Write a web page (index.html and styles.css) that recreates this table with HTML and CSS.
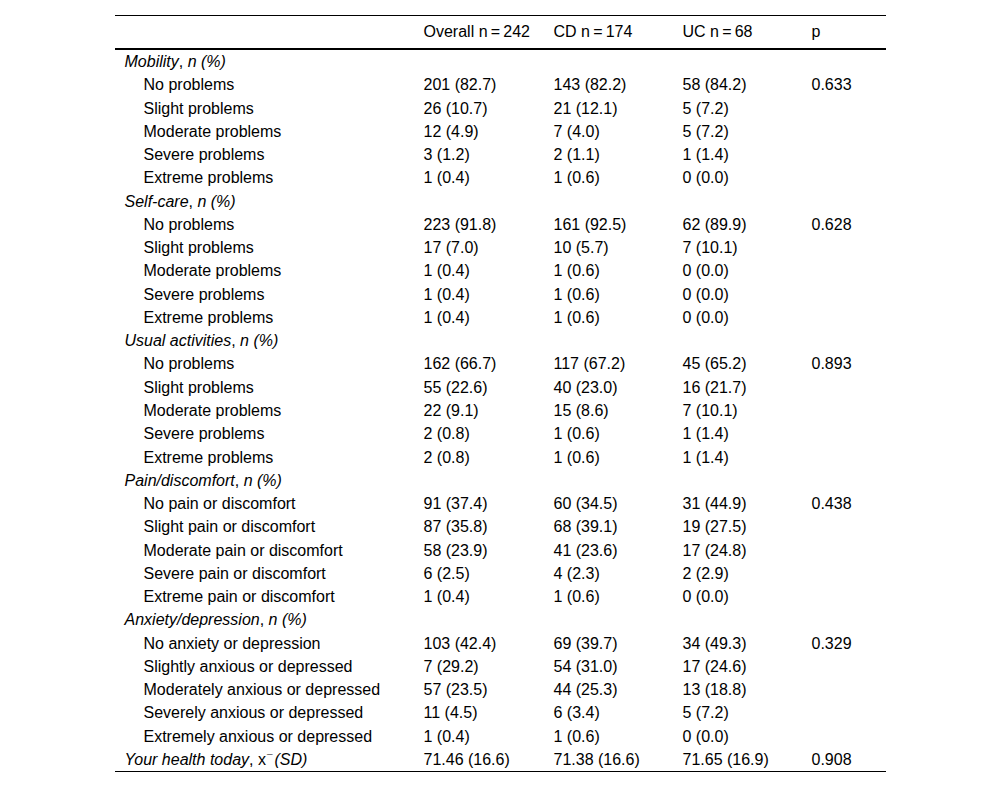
FILE: index.html
```html
<!DOCTYPE html>
<html lang="en">
<head>
<meta charset="utf-8">
<title>EQ-5D table</title>
<link rel="stylesheet" href="styles.css">
</head>
<body>
<table class="data">
  <colgroup>
    <col class="c-label">
    <col class="c-overall">
    <col class="c-cd">
    <col class="c-uc">
    <col class="c-p">
  </colgroup>
  <thead>
    <tr><th></th><th>Overall n&thinsp;=&thinsp;242</th><th>CD n&thinsp;=&thinsp;174</th><th>UC n&thinsp;=&thinsp;68</th><th>p</th></tr>
  </thead>
  <tbody>
    <tr class="grp"><td><i>Mobility</i>, <i>n (%)</i></td><td></td><td></td><td></td><td></td></tr>
    <tr><td class="sub">No problems</td><td>201 (82.7)</td><td>143 (82.2)</td><td>58 (84.2)</td><td>0.633</td></tr>
    <tr><td class="sub">Slight problems</td><td>26 (10.7)</td><td>21 (12.1)</td><td>5 (7.2)</td><td></td></tr>
    <tr><td class="sub">Moderate problems</td><td>12 (4.9)</td><td>7 (4.0)</td><td>5 (7.2)</td><td></td></tr>
    <tr><td class="sub">Severe problems</td><td>3 (1.2)</td><td>2 (1.1)</td><td>1 (1.4)</td><td></td></tr>
    <tr><td class="sub">Extreme problems</td><td>1 (0.4)</td><td>1 (0.6)</td><td>0 (0.0)</td><td></td></tr>
    <tr class="grp"><td><i>Self-care</i>, <i>n (%)</i></td><td></td><td></td><td></td><td></td></tr>
    <tr><td class="sub">No problems</td><td>223 (91.8)</td><td>161 (92.5)</td><td>62 (89.9)</td><td>0.628</td></tr>
    <tr><td class="sub">Slight problems</td><td>17 (7.0)</td><td>10 (5.7)</td><td>7 (10.1)</td><td></td></tr>
    <tr><td class="sub">Moderate problems</td><td>1 (0.4)</td><td>1 (0.6)</td><td>0 (0.0)</td><td></td></tr>
    <tr><td class="sub">Severe problems</td><td>1 (0.4)</td><td>1 (0.6)</td><td>0 (0.0)</td><td></td></tr>
    <tr><td class="sub">Extreme problems</td><td>1 (0.4)</td><td>1 (0.6)</td><td>0 (0.0)</td><td></td></tr>
    <tr class="grp"><td><i>Usual activities</i>, <i>n (%)</i></td><td></td><td></td><td></td><td></td></tr>
    <tr><td class="sub">No problems</td><td>162 (66.7)</td><td>117 (67.2)</td><td>45 (65.2)</td><td>0.893</td></tr>
    <tr><td class="sub">Slight problems</td><td>55 (22.6)</td><td>40 (23.0)</td><td>16 (21.7)</td><td></td></tr>
    <tr><td class="sub">Moderate problems</td><td>22 (9.1)</td><td>15 (8.6)</td><td>7 (10.1)</td><td></td></tr>
    <tr><td class="sub">Severe problems</td><td>2 (0.8)</td><td>1 (0.6)</td><td>1 (1.4)</td><td></td></tr>
    <tr><td class="sub">Extreme problems</td><td>2 (0.8)</td><td>1 (0.6)</td><td>1 (1.4)</td><td></td></tr>
    <tr class="grp"><td><i>Pain/discomfort</i>, <i>n (%)</i></td><td></td><td></td><td></td><td></td></tr>
    <tr><td class="sub">No pain or discomfort</td><td>91 (37.4)</td><td>60 (34.5)</td><td>31 (44.9)</td><td>0.438</td></tr>
    <tr><td class="sub">Slight pain or discomfort</td><td>87 (35.8)</td><td>68 (39.1)</td><td>19 (27.5)</td><td></td></tr>
    <tr><td class="sub">Moderate pain or discomfort</td><td>58 (23.9)</td><td>41 (23.6)</td><td>17 (24.8)</td><td></td></tr>
    <tr><td class="sub">Severe pain or discomfort</td><td>6 (2.5)</td><td>4 (2.3)</td><td>2 (2.9)</td><td></td></tr>
    <tr><td class="sub">Extreme pain or discomfort</td><td>1 (0.4)</td><td>1 (0.6)</td><td>0 (0.0)</td><td></td></tr>
    <tr class="grp"><td><i>Anxiety/depression</i>, <i>n (%)</i></td><td></td><td></td><td></td><td></td></tr>
    <tr><td class="sub">No anxiety or depression</td><td>103 (42.4)</td><td>69 (39.7)</td><td>34 (49.3)</td><td>0.329</td></tr>
    <tr><td class="sub">Slightly anxious or depressed</td><td>7 (29.2)</td><td>54 (31.0)</td><td>17 (24.6)</td><td></td></tr>
    <tr><td class="sub">Moderately anxious or depressed</td><td>57 (23.5)</td><td>44 (25.3)</td><td>13 (18.8)</td><td></td></tr>
    <tr><td class="sub">Severely anxious or depressed</td><td>11 (4.5)</td><td>6 (3.4)</td><td>5 (7.2)</td><td></td></tr>
    <tr><td class="sub">Extremely anxious or depressed</td><td>1 (0.4)</td><td>1 (0.6)</td><td>0 (0.0)</td><td></td></tr>
    <tr class="grp last"><td><i>Your health today</i>, x<span class="macron">&#175;</span><i>(SD)</i></td><td>71.46 (16.6)</td><td>71.38 (16.6)</td><td>71.65 (16.9)</td><td>0.908</td></tr>
  </tbody>
</table>
</body>
</html>
```
FILE: styles.css
```css
html, body {
  margin: 0;
  padding: 0;
  background: #fff;
}
body {
  font-family: "Liberation Sans", Arial, sans-serif;
  font-size: 16px;
  color: #000;
}
.data {
  border-collapse: collapse;
  width: 771px;
  margin: 15px auto 0;
  table-layout: fixed;
  border-top: 1px solid #000;
  border-bottom: 1px solid #000;
}
.c-label { width: 299px; }
.c-overall { width: 130px; }
.c-cd { width: 129px; }
.c-uc { width: 129px; }
.c-p { width: 84px; }
.data th {
  font-weight: normal;
  text-align: left;
  height: 32px;
  padding: 0 0 0 10px;
  vertical-align: middle;
  border-bottom: 2px solid #000;
  white-space: nowrap;
}
.data td {
  padding: 0 0 0 10px;
  height: 23.27px;
  line-height: 23.27px;
  vertical-align: middle;
  white-space: nowrap;
}
.data td.sub {
  padding-left: 29px;
}
.macron {
  font-size: 10px;
  vertical-align: 2px;
  margin: 0 2px 0 1px;
  line-height: 1;
}
```
